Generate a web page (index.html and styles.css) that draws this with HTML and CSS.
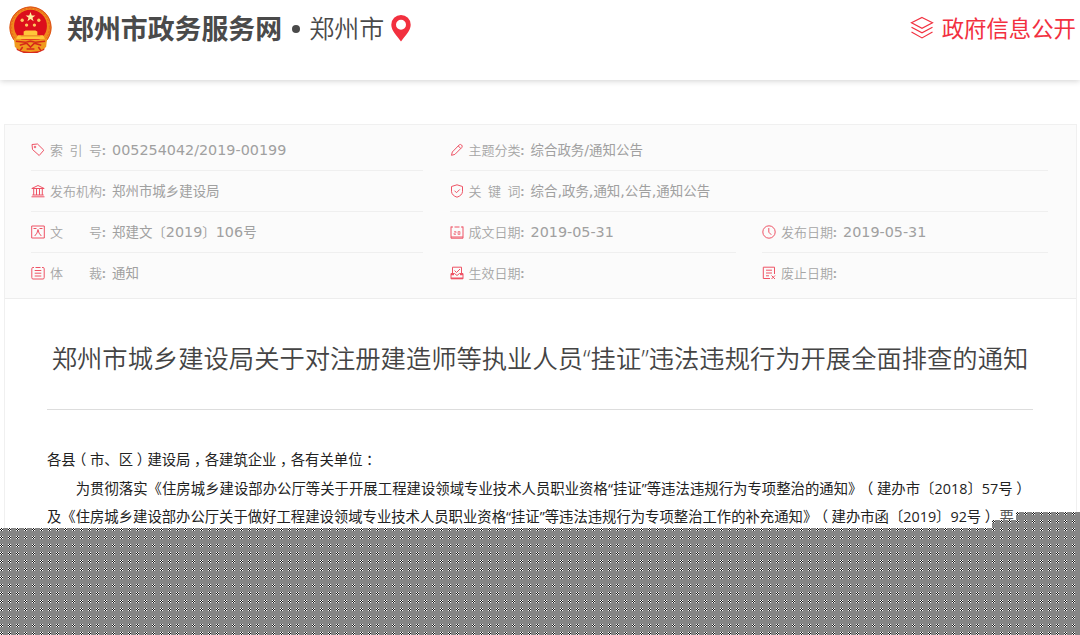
FILE: index.html
```html
<!DOCTYPE html>
<html lang="zh-CN">
<head>
    <meta charset="UTF-8">
    <meta name="viewport" content="width=device-width, initial-scale=1.0">
    <title>郑州市政务服务网</title>
    <link rel="stylesheet" href="styles.css">
</head>
<body>
    <div class="header">
        <div class="brand">
            <svg class="emblem" viewBox="0 0 44 48">
                <path d="M6 33h32l-2 12-7 3H15l-7-3z" fill="#d8281c"/>
                <circle cx="22" cy="22" r="21.5" fill="#f08a1c"/>
                <circle cx="22" cy="22" r="21" fill="none" stroke="#d9481c" stroke-width="1"/>
                <circle cx="22" cy="22" r="19.4" fill="none" stroke="#e8601a" stroke-width="1" stroke-dasharray="2 1.5"/>
                <circle cx="22" cy="20.5" r="16.8" fill="#dc0f1c"/>
                <path d="M22 6l1.3 3.600h3.700l-3 2.300 1.200 3.600-3.200-2.200-3.200 2.200 1.200-3.600-3-2.300h3.700z" fill="#fff0a0"/>
                <g fill="#ffc860">
                    <circle cx="13.5" cy="14.5" r="1.7"/>
                    <circle cx="30.5" cy="14.5" r="1.7"/>
                    <circle cx="18" cy="19.5" r="1.7"/>
                    <circle cx="26" cy="19.5" r="1.7"/>
                </g>
                <path d="M15 26l2-1h10l2 1v4h6l2 4H7l2-4h6z" fill="#ffc63a"/>
                <path d="M12 30.500h20" stroke="#e06a1a" stroke-width=".8"/>
                <path d="M5 33q17 4 34 0l-1 9-6 4-10 1-10-1-6-4z" fill="#f09a1e"/>
                <path d="M7 36l10 1 5-1 5 1 10-1M11 40l7-2 4 4 4-4 7 2M14 42l-3 4M30 42l3 4M18 44h8" stroke="#d62a18" stroke-width="1.6" fill="none"/>
            </svg>
            <h1>郑州市政务服务网</h1>
            <span class="dot"></span>
            <span class="city">郑州市</span>
            <svg class="pin" viewBox="0 0 20 27">
                <path fill-rule="evenodd" d="M10 0a9.700 9.700 0 0 0-9.700 9.700C.3 15.500 5.500 20 10 26.500 14.500 20 19.700 15.500 19.700 9.700A9.700 9.700 0 0 0 10 0zm0 4.700a5 5 0 1 1 0 10 5 5 0 0 1 0-10z" fill="#f2303f"/>
            </svg>
        </div>
        <a class="open-info">
            <svg viewBox="0 0 24 24">
                <path d="M12 1.500l10.500 5.300L12 12.300 1.500 6.800zM1.500 11.300L12 16.900l10.500-5.600M1.500 15.900L12 21.900l10.500-6"/>
            </svg>
            <span>政府信息公开</span>
        </a>
    </div>

    <div class="article">
        <div class="info">
            <div class="item">
                <svg viewBox="0 0 14 14"><path d="M1 1.500l5.500-.5 6.300 6.200-4.600 5.300L1.500 6.500z"/><circle cx="4" cy="4" r=".8"/></svg>
                <span class="label"><i>索</i><i>引</i><i>号</i></span>
                <span class="value"><b>005254042/2019-00199</b></span>
            </div>
            <div class="item wide">
                <svg viewBox="0 0 14 14"><path d="M1.500 12.300l.8-3.300 7-7.200q1.200-.8 2.300.2t.3 2.400l-7 7zM8.300 3l2.500 2.500"/></svg>
                <span class="label"><i>主</i><i>题</i><i>分</i><i>类</i></span>
                <span class="value">综合政务<b>/</b>通知公告</span>
            </div>
            <div class="item">
                <svg viewBox="0 0 14 14"><path d="M.8 4.500L7 1.500l6.200 3zM2.700 5v6M5.500 5v6M8.500 5v6M11.300 5v6M1.300 11h11.400M.5 12.800h13"/></svg>
                <span class="label"><i>发</i><i>布</i><i>机</i><i>构</i></span>
                <span class="value">郑州市城乡建设局</span>
            </div>
            <div class="item wide">
                <svg viewBox="0 0 14 14"><path d="M7 .8l5.500 1.700v5.200Q12 11.500 7 13.200 2 11.500 1.500 7.700V2.500zM4.500 6.700l2 2 3.300-3.300"/></svg>
                <span class="label"><i>关</i><i>键</i><i>词</i></span>
                <span class="value">综合<b>,</b>政务<b>,</b>通知<b>,</b>公告<b>,</b>通知公告</span>
            </div>
            <div class="item">
                <svg viewBox="0 0 14 14"><path d="M.7 1h12.600v12H.7zM2.500 3.500h3M8.500 3.500h3M3.700 11Q6.500 8.500 7 4.500 7.500 8.500 10.300 11"/></svg>
                <span class="label"><i>文</i><i>号</i></span>
                <span class="value">郑建文〔<b>2019</b>〕<b>106</b>号</span>
            </div>
            <div class="item">
                <svg viewBox="0 0 14 14"><path d="M1 1.500v11.700h12V1.500M1 2h2M11 2h2M4.500 2h5M1 12h12"/><path class="thin" d="M4 6.500h2v1.500H4v1.500h2M8 6.500h2v3H8zM8 8h2"/></svg>
                <span class="label"><i>成</i><i>文</i><i>日</i><i>期</i></span>
                <span class="value"><b>2019-05-31</b></span>
            </div>
            <div class="item">
                <svg viewBox="0 0 14 14"><circle cx="7" cy="7" r="6.2"/><path d="M6.800 3v4.200l2.500 2.600"/></svg>
                <span class="label"><i>发</i><i>布</i><i>日</i><i>期</i></span>
                <span class="value"><b>2019-05-31</b></span>
            </div>
            <div class="item">
                <svg viewBox="0 0 14 14"><path d="M3 1.500H2Q.8 1.500.8 2.700v9Q.8 13 2 13h10q1.200 0 1.200-1.300v-9q0-1.200-1.200-1.200h-1M4.500 1.500h5M3.700 4.500h6.600M3.700 7.200h6.600M3.700 10h6.600"/></svg>
                <span class="label"><i>体</i><i>裁</i></span>
                <span class="value">通知</span>
            </div>
            <div class="item">
                <svg viewBox="0 0 14 14"><path d="M2.500 7V1.200h9V7M4.500 4.500l2 2 3.500-3.500M1 7.500h3.500L7 9.500l2.500-2H13v5.300H1z"/><path d="M1 8.500h3M10 8.500h3M1 12.300h12" stroke-width="1.5"/></svg>
                <span class="label"><i>生</i><i>效</i><i>日</i><i>期</i></span>
            </div>
            <div class="item">
                <svg viewBox="0 0 14 14"><path d="M12.500 8V1.200H1.300v11.300H8M4 4.200h6M4 7h6M4 9.800h3M9.500 9.500l3.500 3.500M13 9.500L9.500 13"/></svg>
                <span class="label"><i>废</i><i>止</i><i>日</i><i>期</i></span>
            </div>
        </div>

        <div class="content">
            <h2>郑州市城乡建设局关于对注册建造师等执业人员“挂证”违法违规行为开展全面排查的通知</h2>
            <div class="text">
                <p>各县<i>（</i>市、区<i>）</i>建设局<i>，</i>各建筑企业<i>，</i>各有关单位<i>：</i></p>
                <p class="indent">为贯彻落实《住房城乡建设部办公厅等关于开展工程建设领域专业技术人员职业资格“挂证”等违法违规行为专项整治的通知》<i>（</i>建办市〔2018〕57号<i>）</i></p>
                <p>及《住房城乡建设部办公厅关于做好工程建设领域专业技术人员职业资格“挂证”等违法违规行为专项整治工作的补充通知》<i>（</i>建办市函〔2019〕92号<i>）</i><span class="last">要</span></p>
            </div>
        </div>
    </div>

    <!-- stepped grey dither that hides the rest of the article -->
    <svg class="mask" width="1080" height="123">
        <defs>
            <pattern id="dither" width="8" height="8" patternUnits="userSpaceOnUse">
                <rect width="8" height="8" fill="#868686"/>
                <path d="M0 0h1v1H0zM2 0h1v1H2zM1 1h1v1H1zM0 2h1v1H0zM2 2h1v1H2z" fill="#fff"/>
                <path d="M1 0h1v1H1zM0 1h1v1H0zM2 1h1v1H2zM1 2h1v1H1z" fill="#111"/>
            </pattern>
        </defs>
        <path d="M0 16H992V8h24V0h64v123H0z" fill="url(#dither)" shape-rendering="crispEdges"/>
    </svg>
</body>
</html>
```
FILE: styles.css
```css
* {
    box-sizing: border-box;
}
body {
    margin: 0;
    height: 635px;
    overflow: hidden;
    position: relative;
    background-color: #fff;
    font-family: "Open Sans", "Noto Sans CJK SC", sans-serif;
    text-spacing-trim: space-all;
}
.header {
    height: 80px;
    padding: 0 4px 0 9px;
    display: flex;
    justify-content: space-between;
    align-items: flex-start;
    box-shadow: 0 1px 6px rgba(0, 0, 0, 0.18);
}
.brand {
    display: flex;
    align-items: center;
    height: 57px;
    color: #4a4a4a;
}
.emblem {
    width: 43px;
    height: 47px;
    margin: 2px 15px 0 0;
}
.brand h1 {
    margin: 0;
    font-size: 26.9px;
    line-height: 40px;
    font-weight: bold;
}
.dot {
    width: 8px;
    height: 8px;
    border-radius: 50%;
    background-color: #4a4a4a;
    margin: 0 9px 0 10px;
}
.city {
    font-size: 25px;
    line-height: 38px;
    font-weight: 350;
    padding-bottom: 2px;
}
.pin {
    width: 20px;
    height: 27px;
    margin-left: 7px;
}
.open-info {
    display: flex;
    align-items: center;
    gap: 8px;
    height: 55px;
    color: #f2303f;
    font-size: 22.4px;
}
.open-info svg {
    width: 24px;
    height: 24px;
    fill: none;
    stroke: #f2303f;
    stroke-width: 1.2;
}

.article {
    margin: 44px 3px 0 4px;
    height: 520px;
    border: 1px solid #f0f0f0;
}
.info {
    display: grid;
    grid-template-columns: 392px 286px 286px;
    grid-auto-rows: 41px;
    column-gap: 26.5px;
    height: 174px;
    padding: 5px 26px;
    background-color: #fbfbfb;
    border-bottom: 1px solid #ededed;
}
.item {
    display: flex;
    align-items: center;
    padding-bottom: 1px;
    border-bottom: 1px solid #efefef;
    font-size: 13.45px;
    line-height: 20px;
    color: #a0a0a0;
    white-space: nowrap;
}
.item.wide {
    grid-column: span 2;
}
.item:nth-last-child(-n+3) {
    padding-bottom: 2px;
    border-bottom: none;
}
.item svg {
    width: 14px;
    height: 14px;
    margin-right: 5px;
    fill: none;
    stroke: #ee5365;
    stroke-width: 1;
}
.item svg .thin {
    stroke-width: 0.6;
}
.label {
    display: flex;
    justify-content: space-between;
    width: 52px;
    margin-right: 10px;
    font-size: 13px;
    color: #a5a5a5;
    font-weight: 350;
    position: relative;
}
.label i,
.text i {
    font-style: normal;
}
.label::after {
    content: ":";
    position: absolute;
    left: 100%;
    font-weight: bold;
}
.value b {
    font-family: "DejaVu Sans", sans-serif;
    font-weight: normal;
    font-size: 14.35px;
    line-height: 1;
}

.content {
    padding: 0 43px 0 42px;
}
.content h2 {
    display: flex;
    justify-content: center;
    margin: 0;
    height: 111px;
    padding-top: 8px;
    line-height: 102px;
    border-bottom: 1px solid #ddd;
    font-size: 25.3px;
    font-weight: 350;
    color: #444;
    white-space: nowrap;
}
.text {
    padding-top: 36px;
    font-size: 14.35px;
    line-height: 28.6px;
    color: #222;
    white-space: nowrap;
}
.text p {
    margin: 0;
    height: 28.6px;
}
/* half-width glyph centred in a full-width cell */
.text i {
    font-feature-settings: "halt";
    margin: 0 0.25em;
}
.text .indent {
    text-indent: 2em;
    letter-spacing: 0.04px;
}
.last {
    margin-left: 4px;
    color: #555;
}

.mask {
    position: absolute;
    left: 0;
    top: 512px;
}
```
